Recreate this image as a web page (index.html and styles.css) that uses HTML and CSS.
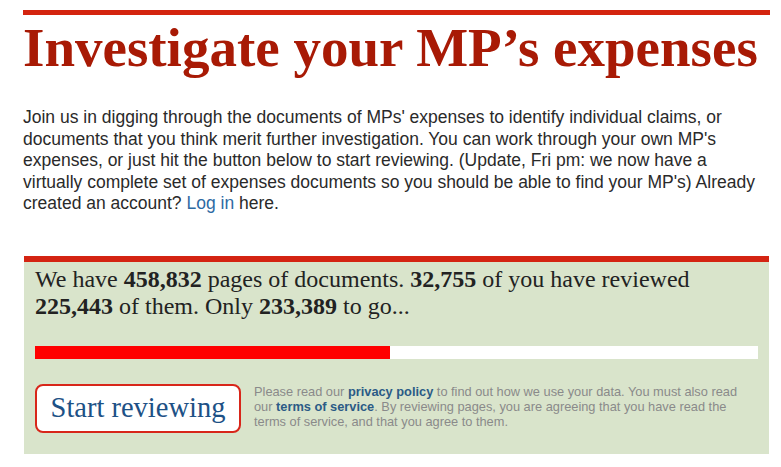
FILE: index.html
```html
<!DOCTYPE html>
<html lang="en">
<head>
<meta charset="utf-8">
<title>Investigate your MP's expenses</title>
<link rel="stylesheet" href="styles.css">
</head>
<body>
<div class="page">
  <div class="rule"></div>
  <h1 class="title">Investigate your MP’s expenses</h1>
  <p class="intro">Join us in digging through the documents of MPs' expenses to identify individual claims, or documents that you think merit further investigation. You can work through your own MP's expenses, or just hit the button below to start reviewing. (Update, Fri pm: we now have a virtually complete set of expenses documents so you should be able to find your MP's) Already created an account? <a href="#" class="intro-link">Log in</a> here.</p>
  <div class="panel">
    <p class="stats">We have <b>458,832</b> pages of documents. <b>32,755</b> of you have reviewed <b>225,443</b> of them. Only <b>233,389</b> to go...</p>
    <div class="bar"><div class="bar-fill" style="width: 49.13%"></div></div>
    <div class="action">
      <a href="#" class="start-btn">Start reviewing</a>
      <p class="legal">Please read our <a href="#" class="legal-link">privacy policy</a> to find out how we use your data. You must also read our <a href="#" class="legal-link">terms of service</a>. By reviewing pages, you are agreeing that you have read the terms of service, and that you agree to them.</p>
    </div>
  </div>
</div>
</body>
</html>
```
FILE: styles.css
```css
html, body {
  margin: 0;
  padding: 0;
  background: #ffffff;
}
.page {
  width: 747px;
  padding: 10px 0 0 23px;
}
.rule {
  height: 5px;
  background: #d4240f;
}
.title {
  margin: 5px 0 0 0;
  font-family: "Liberation Serif", serif;
  font-weight: 700;
  font-size: 55px;
  line-height: 55px;
  color: #a81a05;
  white-space: nowrap;
}
.intro {
  margin: 32px 0 0 0;
  width: 745px;
  font-family: "Liberation Sans", Arial, sans-serif;
  font-size: 17.5px;
  line-height: 21.5px;
  color: #2a2a2a;
}
.intro-link {
  color: #2e6aa3;
  text-decoration: none;
}
.panel {
  margin: 41px 1px 0 1px;
  border-top: 6px solid #d42412;
  background: #d9e4cb;
  padding: 4px 11px 21px 11px;
}
.stats {
  margin: 0;
  font-family: "Liberation Serif", serif;
  font-size: 24px;
  line-height: 27px;
  color: #222222;
}
.stats b {
  font-weight: 700;
}
.bar {
  margin-top: 26px;
  height: 13px;
  background: #ffffff;
}
.bar-fill {
  height: 100%;
  background: #ff0000;
}
.action {
  margin-top: 25px;
  display: flex;
  align-items: flex-start;
  gap: 13px;
}
.start-btn {
  flex: none;
  box-sizing: border-box;
  width: 206px;
  height: 49px;
  display: flex;
  align-items: center;
  justify-content: center;
  border: 2px solid #d8261a;
  border-radius: 8px;
  background: #ffffff;
  font-family: "Liberation Serif", serif;
  font-size: 28.5px;
  color: #1d5186;
  text-decoration: none;
}
.legal {
  margin: 0;
  width: 500px;
  font-family: "Liberation Sans", Arial, sans-serif;
  font-size: 12.8px;
  line-height: 15px;
  color: #8a8a8a;
}
.legal-link {
  color: #2b5b86;
  font-weight: 700;
  text-decoration: none;
}
```
